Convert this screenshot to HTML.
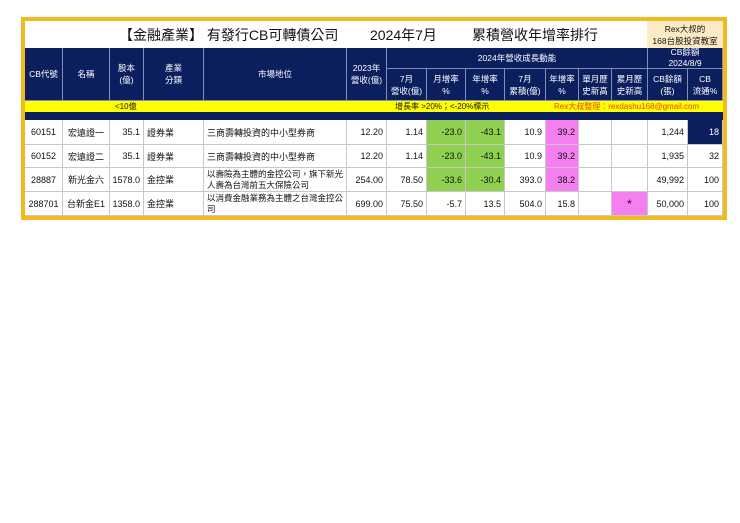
<!DOCTYPE html>
<html><head><meta charset="utf-8"><style>
body{margin:0;width:740px;height:523px;background:#fff;position:relative;overflow:hidden;font-family:"Liberation Sans","Noto Sans CJK TC",sans-serif;}
.a{position:absolute;box-sizing:border-box;}
.h{background:#0b1f5e;color:#fff;font-size:8.5px;display:flex;align-items:center;justify-content:center;text-align:center;line-height:12px;border-right:1px solid #7f8fb8;border-bottom:1px solid #7f8fb8;}
.d{font-size:9px;color:#111;display:flex;align-items:center;border-right:1px solid #c8c8c8;border-bottom:1px solid #c8c8c8;padding:0 3px;white-space:nowrap;}
.r{justify-content:flex-end;}.c{justify-content:center;}
.g{background:#8fd050;}.p{background:#f57ef0;}
.m{white-space:normal;line-height:11px;font-size:8.5px;}
.y span{white-space:nowrap;}
</style></head><body>
<div class="a" style="left:21px;top:17px;width:706px;height:203px;border:4px solid #f2bb1d;background:#fff"></div>
<div class="a" style="left:25px;top:21px;width:622px;height:27px;display:flex;align-items:center;font-size:14px;color:#111;">
<span style="position:absolute;left:94px">【金融產業】 有發行CB可轉債公司</span>
<span style="position:absolute;left:345px">2024年7月</span>
<span style="position:absolute;left:447px">累積營收年增率排行</span></div>
<div class="a" style="left:647px;top:21px;width:76px;height:27px;background:#fcebc4;font-size:8.5px;line-height:12px;text-align:center;padding-top:2px;color:#111">Rex大叔的<br>168台股投資教室</div>
<div class="a h" style="left:25px;top:48px;width:38px;height:53px">CB代號</div>
<div class="a h" style="left:63px;top:48px;width:47px;height:53px">名稱</div>
<div class="a h" style="left:110px;top:48px;width:34px;height:53px">股本<br>(億)</div>
<div class="a h" style="left:144px;top:48px;width:60px;height:53px">產業<br>分類</div>
<div class="a h" style="left:204px;top:48px;width:143px;height:53px">市場地位</div>
<div class="a h" style="left:347px;top:48px;width:40px;height:53px">2023年<br>營收(億)</div>
<div class="a h" style="left:387px;top:48px;width:261px;height:21px">2024年營收成長動能</div>
<div class="a h" style="left:648px;top:48px;width:75px;height:21px;font-size:8.5px;line-height:11px">CB餘額<br>2024/8/9</div>
<div class="a h" style="left:387px;top:69px;width:40px;height:32px">7月<br>營收(億)</div>
<div class="a h" style="left:427px;top:69px;width:39px;height:32px">月增率<br>%</div>
<div class="a h" style="left:466px;top:69px;width:39px;height:32px">年增率<br>%</div>
<div class="a h" style="left:505px;top:69px;width:41px;height:32px">7月<br>累積(億)</div>
<div class="a h" style="left:546px;top:69px;width:33px;height:32px">年增率<br>%</div>
<div class="a h" style="left:579px;top:69px;width:33px;height:32px">單月歷<br>史新高</div>
<div class="a h" style="left:612px;top:69px;width:36px;height:32px">累月歷<br>史新高</div>
<div class="a h" style="left:648px;top:69px;width:40px;height:32px">CB餘額<br>(張)</div>
<div class="a h" style="left:688px;top:69px;width:35px;height:32px">CB<br>流通%</div>
<div class="a y" style="left:25px;top:101px;width:698px;height:11px;background:#ffff00;font-size:8px;line-height:11px;color:#111">
<span style="position:absolute;left:90px">&lt;10億</span>
<span style="position:absolute;left:370px">增長率 &gt;20%；&lt;-20%標示</span>
<span style="position:absolute;left:529px;color:#e8451a">Rex大叔整理：rexdashu168@gmail.com</span></div>
<div class="a" style="left:25px;top:112px;width:698px;height:8px;background:#0b1f5e"></div>

<div class="a d c" style="left:25px;top:120px;width:38px;height:25px">60151</div>
<div class="a d c" style="left:63px;top:120px;width:47px;height:25px">宏遠證一</div>
<div class="a d r" style="left:110px;top:120px;width:34px;height:25px">35.1</div>
<div class="a d" style="left:144px;top:120px;width:60px;height:25px">證券業</div>
<div class="a d" style="left:204px;top:120px;width:143px;height:25px">三商壽轉投資的中小型券商</div>
<div class="a d r" style="left:347px;top:120px;width:40px;height:25px">12.20</div>
<div class="a d r" style="left:387px;top:120px;width:40px;height:25px">1.14</div>
<div class="a d r g" style="left:427px;top:120px;width:39px;height:25px">-23.0</div>
<div class="a d r g" style="left:466px;top:120px;width:39px;height:25px">-43.1</div>
<div class="a d r" style="left:505px;top:120px;width:41px;height:25px">10.9</div>
<div class="a d r p" style="left:546px;top:120px;width:33px;height:25px">39.2</div>
<div class="a d" style="left:579px;top:120px;width:33px;height:25px"></div>
<div class="a d" style="left:612px;top:120px;width:36px;height:25px"></div>
<div class="a d r" style="left:648px;top:120px;width:40px;height:25px">1,244</div>
<div class="a d r" style="left:688px;top:120px;width:35px;height:25px;background:#0b1f5e;color:#fff">18</div>

<div class="a d c" style="left:25px;top:145px;width:38px;height:23px">60152</div>
<div class="a d c" style="left:63px;top:145px;width:47px;height:23px">宏遠證二</div>
<div class="a d r" style="left:110px;top:145px;width:34px;height:23px">35.1</div>
<div class="a d" style="left:144px;top:145px;width:60px;height:23px">證券業</div>
<div class="a d" style="left:204px;top:145px;width:143px;height:23px">三商壽轉投資的中小型券商</div>
<div class="a d r" style="left:347px;top:145px;width:40px;height:23px">12.20</div>
<div class="a d r" style="left:387px;top:145px;width:40px;height:23px">1.14</div>
<div class="a d r g" style="left:427px;top:145px;width:39px;height:23px">-23.0</div>
<div class="a d r g" style="left:466px;top:145px;width:39px;height:23px">-43.1</div>
<div class="a d r" style="left:505px;top:145px;width:41px;height:23px">10.9</div>
<div class="a d r p" style="left:546px;top:145px;width:33px;height:23px">39.2</div>
<div class="a d" style="left:579px;top:145px;width:33px;height:23px"></div>
<div class="a d" style="left:612px;top:145px;width:36px;height:23px"></div>
<div class="a d r" style="left:648px;top:145px;width:40px;height:23px">1,935</div>
<div class="a d r" style="left:688px;top:145px;width:35px;height:23px">32</div>

<div class="a d c" style="left:25px;top:168px;width:38px;height:24px">28887</div>
<div class="a d c" style="left:63px;top:168px;width:47px;height:24px">新光金六</div>
<div class="a d r" style="left:110px;top:168px;width:34px;height:24px">1578.0</div>
<div class="a d" style="left:144px;top:168px;width:60px;height:24px">金控業</div>
<div class="a d m" style="left:204px;top:168px;width:143px;height:24px">以壽險為主體的金控公司，旗下新光人壽為台灣前五大保險公司</div>
<div class="a d r" style="left:347px;top:168px;width:40px;height:24px">254.00</div>
<div class="a d r" style="left:387px;top:168px;width:40px;height:24px">78.50</div>
<div class="a d r g" style="left:427px;top:168px;width:39px;height:24px">-33.6</div>
<div class="a d r g" style="left:466px;top:168px;width:39px;height:24px">-30.4</div>
<div class="a d r" style="left:505px;top:168px;width:41px;height:24px">393.0</div>
<div class="a d r p" style="left:546px;top:168px;width:33px;height:24px">38.2</div>
<div class="a d" style="left:579px;top:168px;width:33px;height:24px"></div>
<div class="a d" style="left:612px;top:168px;width:36px;height:24px"></div>
<div class="a d r" style="left:648px;top:168px;width:40px;height:24px">49,992</div>
<div class="a d r" style="left:688px;top:168px;width:35px;height:24px">100</div>

<div class="a d c" style="left:25px;top:192px;width:38px;height:24px">288701</div>
<div class="a d c" style="left:63px;top:192px;width:47px;height:24px">台新金E1</div>
<div class="a d r" style="left:110px;top:192px;width:34px;height:24px">1358.0</div>
<div class="a d" style="left:144px;top:192px;width:60px;height:24px">金控業</div>
<div class="a d m" style="left:204px;top:192px;width:143px;height:24px">以消費金融業務為主體之台灣金控公司</div>
<div class="a d r" style="left:347px;top:192px;width:40px;height:24px">699.00</div>
<div class="a d r" style="left:387px;top:192px;width:40px;height:24px">75.50</div>
<div class="a d r" style="left:427px;top:192px;width:39px;height:24px">-5.7</div>
<div class="a d r" style="left:466px;top:192px;width:39px;height:24px">13.5</div>
<div class="a d r" style="left:505px;top:192px;width:41px;height:24px">504.0</div>
<div class="a d r" style="left:546px;top:192px;width:33px;height:24px">15.8</div>
<div class="a d" style="left:579px;top:192px;width:33px;height:24px"></div>
<div class="a d c p" style="left:612px;top:192px;width:36px;height:24px;font-size:12px">*</div>
<div class="a d r" style="left:648px;top:192px;width:40px;height:24px">50,000</div>
<div class="a d r" style="left:688px;top:192px;width:35px;height:24px">100</div>
</body></html>
